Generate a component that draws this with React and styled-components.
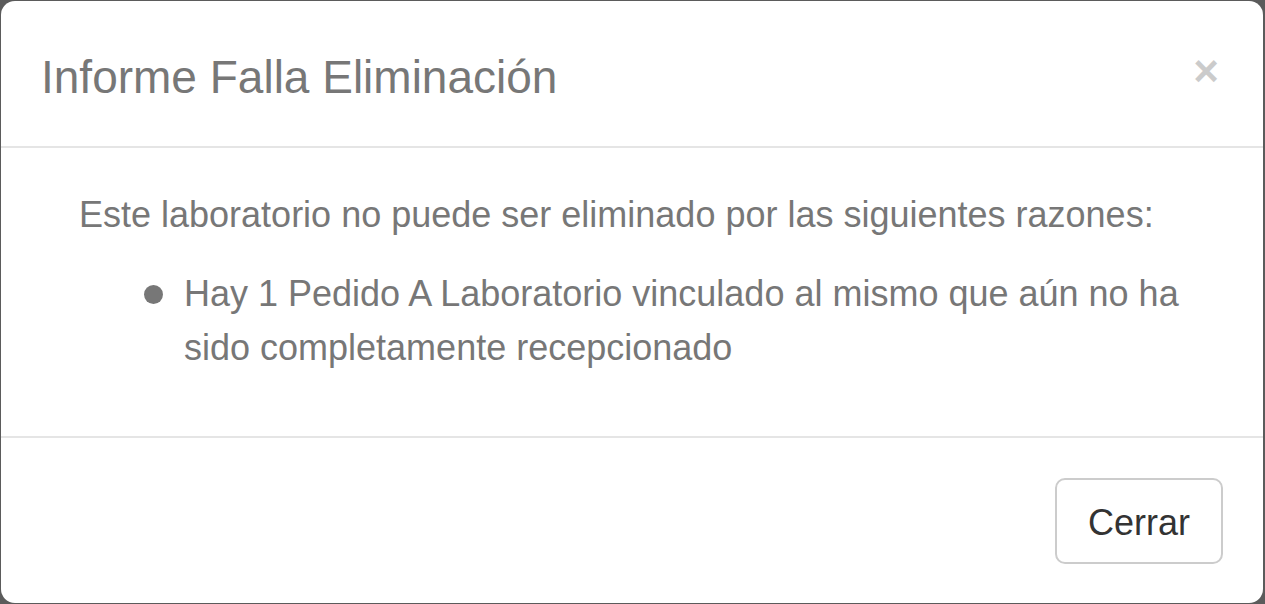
import React from "react";
import styled, { createGlobalStyle } from "styled-components";

const GlobalStyle = createGlobalStyle`
  html, body {
    margin: 0;
    padding: 0;
    background: #5b5b5b;
    font-family: "Liberation Sans", Arial, sans-serif;
  }
  #root {
    padding: 1px 2px 1px 1px;
    height: 604px;
    box-sizing: border-box;
  }
`;

const Modal = styled.div`
  background: #fff;
  border-radius: 14px;
  height: 602px;
  display: flex;
  flex-direction: column;
  overflow: hidden;
`;

const Header = styled.div`
  display: flex;
  justify-content: space-between;
  align-items: flex-start;
  padding: 44px 38px 37px 40px;
  border-bottom: 2px solid #e5e5e5;
`;

const Title = styled.h4`
  margin: 0;
  font-size: 46px;
  font-weight: normal;
  line-height: 64px;
  color: #777;
`;

const Close = styled.button`
  background: none;
  border: none;
  padding: 0;
  margin-top: 4px;
  margin-right: 6px;
  font-family: "Liberation Sans", Arial, sans-serif;
  font-size: 44px;
  font-weight: bold;
  line-height: 1;
  color: #000;
  opacity: 0.2;
  cursor: pointer;
`;

const Body = styled.div`
  flex: 1;
  padding: 40px 38px 0 78px;
  color: #777;
  font-size: 36px;
  line-height: 54px;
`;

const Text = styled.p`
  margin: 0 0 25px;
`;

const List = styled.ul`
  list-style: none;
  margin: 0;
  padding: 0 40px 0 65px;
`;

const Item = styled.li`
  display: flex;
  align-items: flex-start;
`;

const Dot = styled.span`
  flex: none;
  width: 19px;
  height: 19px;
  border-radius: 50%;
  background: #777;
  margin: 18px 21px 0 0;
`;

const Footer = styled.div`
  display: flex;
  justify-content: flex-end;
  padding: 40px 40px 39px;
  border-top: 2px solid #e5e5e5;
`;

const Button = styled.button`
  font-family: "Liberation Sans", Arial, sans-serif;
  font-size: 36px;
  line-height: 50px;
  color: #333;
  background: #fff;
  border: 2px solid #ccc;
  border-radius: 10px;
  padding: 18px 31px 14px;
  cursor: pointer;
`;

export default function App() {
  return (
    <>
      <GlobalStyle />
      <Modal>
        <Header>
          <Title>Informe Falla Eliminación</Title>
          <Close>×</Close>
        </Header>
        <Body>
          <Text>Este laboratorio no puede ser eliminado por las siguientes razones:</Text>
          <List>
            <Item>
              <Dot />
              <span>Hay 1 Pedido A Laboratorio vinculado al mismo que aún no ha sido completamente recepcionado</span>
            </Item>
          </List>
        </Body>
        <Footer>
          <Button>Cerrar</Button>
        </Footer>
      </Modal>
    </>
  );
}
